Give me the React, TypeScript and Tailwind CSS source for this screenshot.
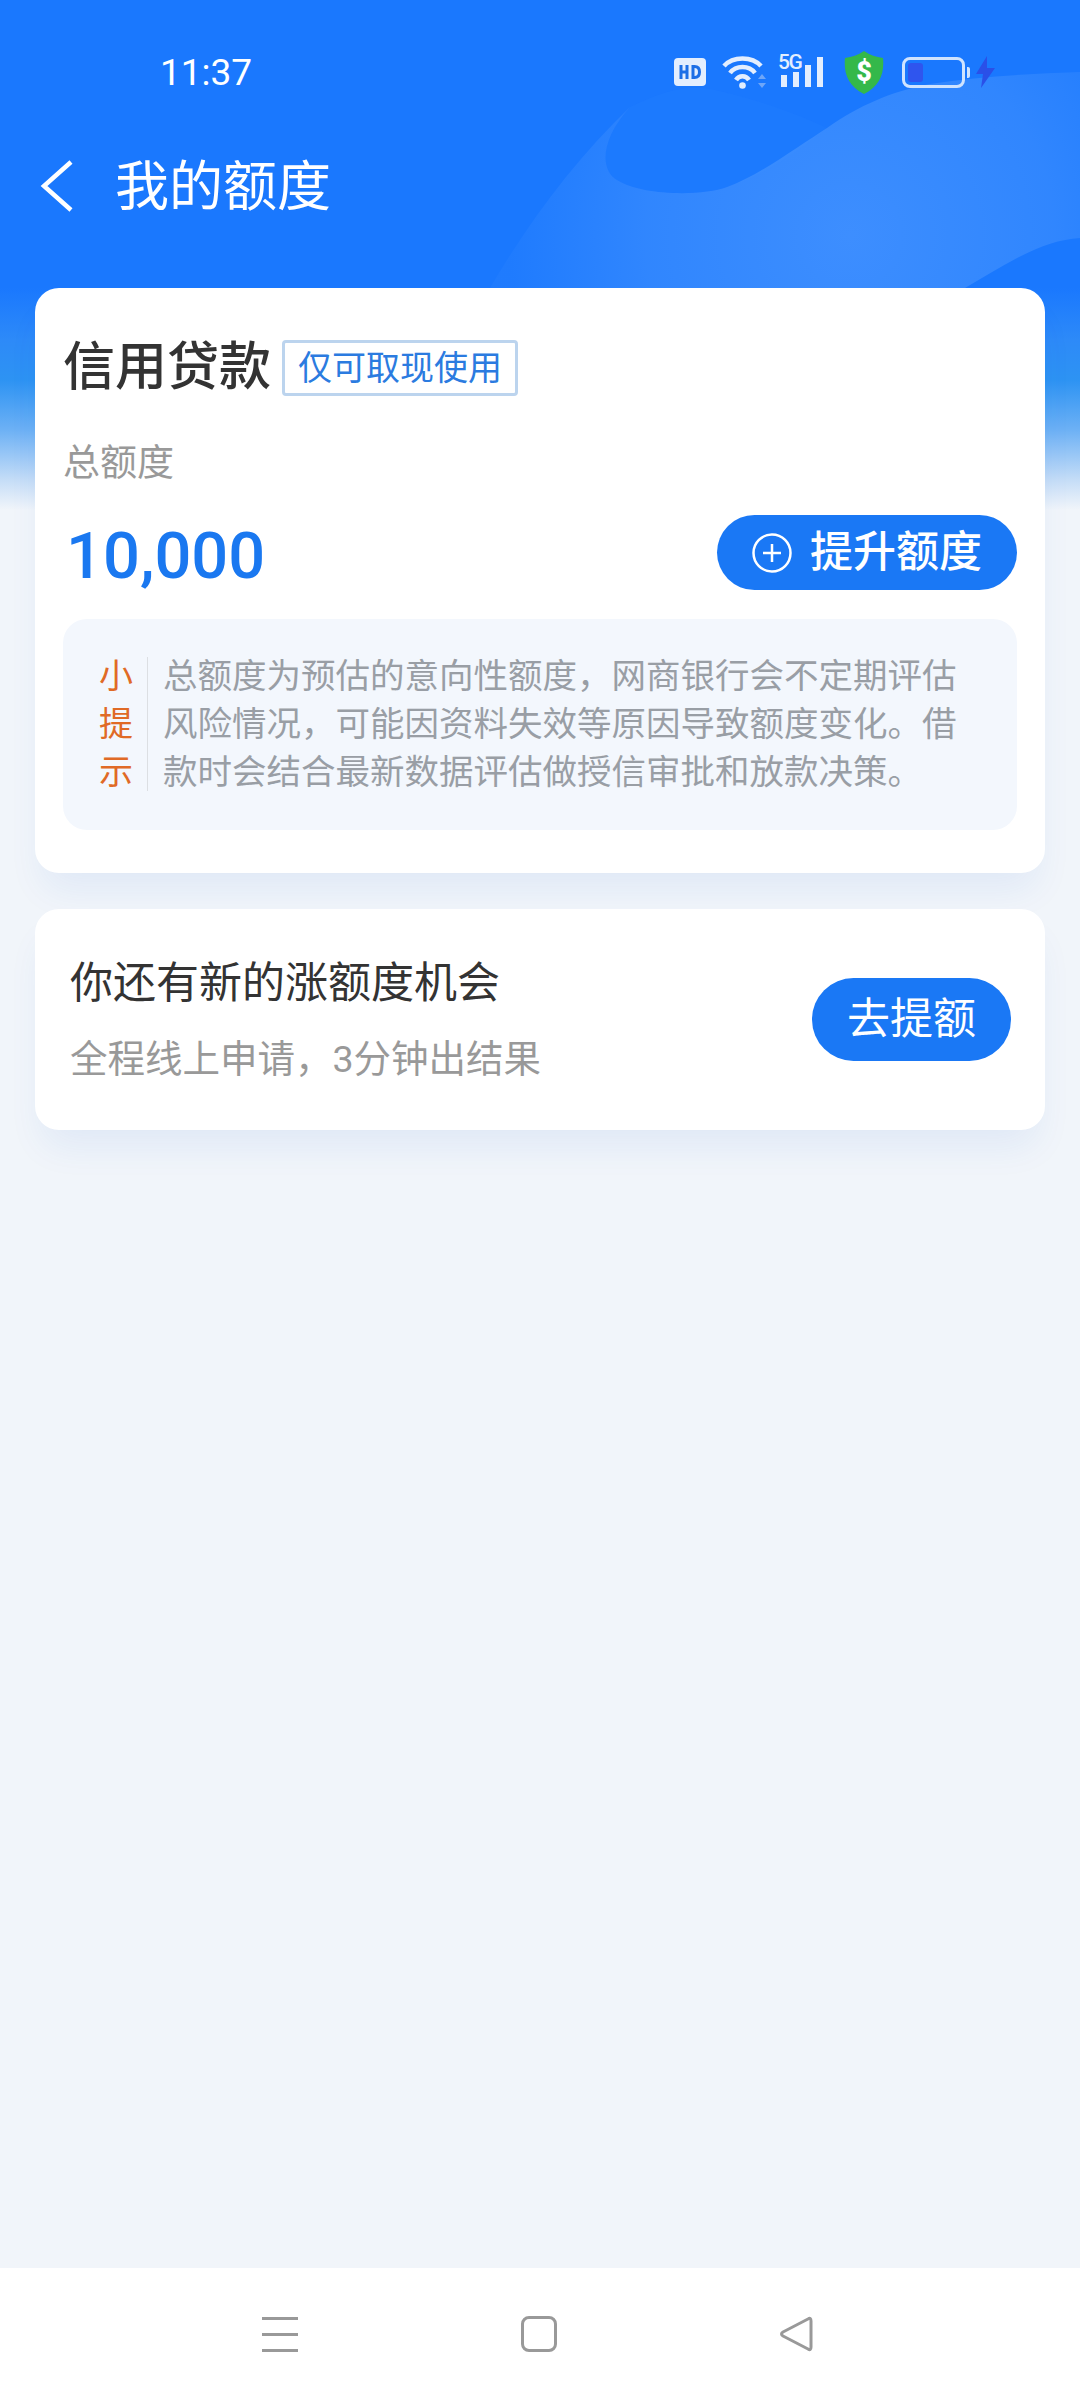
const cjk = "font-['Roboto','Noto_Sans_CJK_SC',sans-serif]";

const HeaderArt = () => (
  <svg className="absolute left-0 top-0" width="1080" height="288" viewBox="0 0 1080 288" fill="none">
    <defs>
      <radialGradient id="wave" cx="850" cy="235" r="340" gradientUnits="userSpaceOnUse">
        <stop offset="0" stopColor="#5aa0ff" stopOpacity="0.55" />
        <stop offset="0.6" stopColor="#5aa0ff" stopOpacity="0.35" />
        <stop offset="1" stopColor="#5aa0ff" stopOpacity="0.08" />
      </radialGradient>
    </defs>
    <path d="M630 107C665 90 690 84 715 90C760 100 800 115 827 128C800 150 760 178 727 187C700 197 640 195 617 180C600 170 600 140 630 107Z" fill="#2a80ff" opacity="0.2" />
    <path d="M490 288C530 220 575 160 630 107C600 140 600 170 617 180C640 195 700 197 727 187C760 175 800 145 827 128C860 105 890 92 930 84C980 76 1030 74 1080 72V238C1040 240 1000 268 965 288Z" fill="url(#wave)" />
  </svg>
);

const StatusIcons = () => (
  <div className="flex items-center">
    <svg width="32" height="28" viewBox="0 0 32 28" className="mr-[16px]">
      <rect width="32" height="28" rx="4" fill="#e3eefe" />
      <path d="M7 7v14M7 14h6M13 7v14" stroke="#1d6fe6" strokeWidth="3" fill="none" />
      <path d="M19 8.500v11h1.500c3.500 0 5-2 5-5.500s-1.500-5.500-5-5.500z" stroke="#1d6fe6" strokeWidth="3" fill="none" />
    </svg>
    <svg width="46" height="34" viewBox="0 0 46 34" fill="none" className="mr-[12px]">
      <path d="M2 11C11 1 30 1 39 11" stroke="#e3eefe" strokeWidth="4.500" />
      <path d="M8 18C14 10 27 10 33 18" stroke="#e3eefe" strokeWidth="4.500" />
      <path d="M14 25C17 20 24 20 27 25" stroke="#e3eefe" strokeWidth="4.500" />
      <circle cx="20.500" cy="30.500" r="3.300" fill="#e3eefe" />
      <path d="M40 19l4 5h-8zM40 33l4-5h-8z" fill="#6ea6f8" />
    </svg>
    <div className="relative mr-[18px] flex h-[30px] w-[46px] items-end justify-end gap-[5.500px] pr-[3px]">
      <span className="absolute left-[-2px] top-[-6px] font-['Roboto',sans-serif] text-[21px] font-medium leading-[22px] tracking-[-1.500px] text-[#e3eefe]">5G</span>
      <span className="h-[12px] w-[6.500px] bg-[#e3eefe]" />
      <span className="h-[15px] w-[6.500px] bg-[#e3eefe]" />
      <span className="h-[22px] w-[6.500px] bg-[#e3eefe]" />
      <span className="h-[30px] w-[6.500px] bg-[#e3eefe]" />
    </div>
    <svg width="40" height="43" viewBox="0 0 40 43" className="mr-[18px]">
      <path d="M20 0C26 4 32 6 39 7C40.500 22 36 35 20 43C4 35-.5 22 1 7C8 6 14 4 20 0Z" fill="#34b84a" />
      <text x="20" y="30" textAnchor="middle" fill="#fff" fontFamily="Roboto" fontWeight="900" fontSize="27">$</text>
    </svg>
    <div className="relative mr-[7px] flex h-[31px] w-[63px] items-center rounded-[8px] border-[3px] border-[#cfe3fe] pl-[3px]">
      <span className="h-[19px] w-[15px] rounded-[3px] bg-[#2f55ee]" />
      <span className="absolute right-[-8px] top-[7px] h-[11px] w-[3px] rounded-r-[2px] bg-[#cfe3fe]" />
    </div>
    <svg width="19" height="32" viewBox="0 0 19 32" className="ml-[4px]">
      <path d="M11 0L0 18h7L5 32L19 12h-8z" fill="#2a50e8" />
    </svg>
  </div>
);

const App = () => {
  return (
    <div className={`relative flex h-[2400px] w-[1080px] flex-col overflow-hidden bg-[#f1f5fa] ${cjk}`}>
      <div className="absolute left-0 top-0 h-[510px] w-full bg-[linear-gradient(180deg,#1a78fe_288px,#2d8af8_340px,#2d93f3_380px,#6db1f5_430px,#c5ddf7_480px,#f1f5fa_510px)]" />
      <HeaderArt />

      <div className="relative flex h-[288px] flex-col">
        <div className="flex h-[144px] items-center justify-between pl-[160px] pr-[85px]">
          <span className="text-[37px] leading-none text-white">11:37</span>
          <StatusIcons />
        </div>
        <div className="flex h-[84px] items-center pl-[40px]">
          <svg width="34" height="54" viewBox="0 0 34 54" fill="none">
            <path d="M31 3L4 27L31 51" stroke="#fff" strokeWidth="4.500" />
          </svg>
          <h1 className="ml-[41px] pt-[3px] text-[54px] font-normal leading-none text-white">我的额度</h1>
        </div>
      </div>

      <div className="relative mx-[35px] flex flex-col gap-[36px]">
        <div className="rounded-[24px] bg-white px-[28px] pb-[43px] pt-[52px] shadow-[0_24px_36px_-8px_rgba(30,90,200,0.08)]">
          <div className="flex items-center">
            <h2 className="text-[52px] font-medium leading-[56px] text-[#333]">信用贷款</h2>
            <span className="ml-[11px] rounded-[4px] border-[3px] border-[#bcd4ee] px-[13px] text-[34px] leading-[50px] text-[#2b7be0]">仅可取现使用</span>
          </div>
          <p className="mt-[45px] text-[37px] leading-[46px] text-[#999]">总额度</p>
          <div className="mt-[28px] flex h-[75px] items-center justify-between">
            <span className="pl-[3px] pt-[7px] text-[65px] font-medium leading-[75px] text-[#1a78f0]">10,000</span>
            <button className="flex h-[75px] w-[300px] items-center justify-center gap-[18px] rounded-full bg-[#1a78f5] text-[43px] font-medium text-white">
              <svg width="40" height="40" viewBox="0 0 40 40" fill="none" stroke="#fff" strokeWidth="2.500">
                <circle cx="20" cy="20" r="18.500" />
                <path d="M20 11v18M11 20h18" />
              </svg>
              提升额度
            </button>
          </div>
          <div className="mt-[29px] flex items-stretch rounded-[24px] bg-[#f3f7fd] pb-[34px] pl-[36px] pr-[50px] pt-[33px]">
            <div className="flex w-[34px] flex-none flex-col text-center text-[34px] leading-[48px] text-[#e06a26]">
              <span>小</span>
              <span>提</span>
              <span>示</span>
            </div>
            <span className="ml-[14px] h-[134px] w-px flex-none self-center bg-[#dcdfe3]" />
            <p className="ml-[15px] text-[34.500px] leading-[48px] text-[#999ea5]">
              总额度为预估的意向性额度，网商银行会不定期评估风险情况，可能因资料失效等原因导致额度变化。借款时会结合最新数据评估做授信审批和放款决策。
            </p>
          </div>
        </div>

        <div className="flex h-[221px] items-center justify-between rounded-[24px] bg-white pl-[35px] pr-[34px] shadow-[0_24px_36px_-8px_rgba(30,90,200,0.08)]">
          <div className="flex flex-col pb-[2px]">
            <span className="text-[43px] leading-[60px] text-[#333]">你还有新的涨额度机会</span>
            <span className="mt-[21px] text-[37.500px] leading-[50px] text-[#999]">全程线上申请，3分钟出结果</span>
          </div>
          <button className="flex h-[83px] w-[199px] items-center justify-center rounded-full bg-[#1a78f5] text-[43px] text-white">去提额</button>
        </div>
      </div>

      <div className="absolute bottom-0 left-0 flex h-[132px] w-full items-center bg-white">
        <div className="ml-[262px] flex w-[36px] flex-col gap-[13px]">
          <span className="h-[3px] w-full bg-[#999]" />
          <span className="h-[3px] w-full bg-[#999]" />
          <span className="h-[3px] w-full bg-[#999]" />
        </div>
        <span className="ml-[223px] h-[36px] w-[36px] rounded-[8px] border-[3px] border-[#999]" />
        <svg width="36" height="36" viewBox="0 0 36 36" fill="none" className="ml-[221px]">
          <path d="M30 3Q33 1 33 5V31Q33 35 30 33L5 20Q2 18 5 16Z" stroke="#999" strokeWidth="3" strokeLinejoin="round" />
        </svg>
      </div>
    </div>
  );
};

export default App;
